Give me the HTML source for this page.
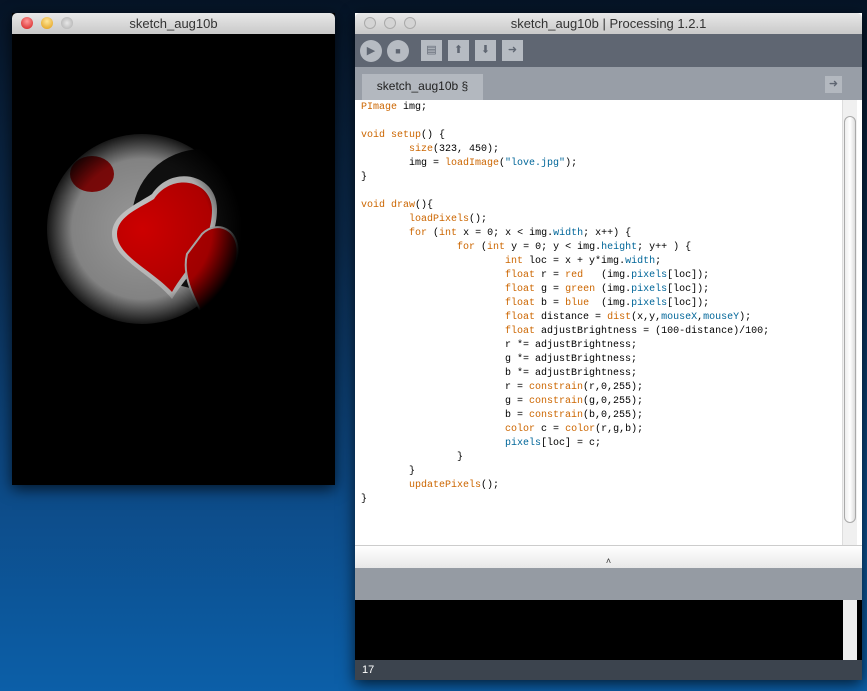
<!DOCTYPE html>
<html><head><style>
body{margin:0;width:867px;height:691px;overflow:hidden;background:linear-gradient(180deg,#061426 0%,#0b2a4c 35%,#0d4a86 70%,#0c5fa8 100%);font-family:"Liberation Sans",sans-serif;position:relative}
.win{position:absolute;box-shadow:0 4px 14px rgba(0,0,0,.7)}
.tb{height:21px;background:linear-gradient(#e8e8e8,#c9c9c9);border-radius:5px 5px 0 0;text-align:center;font-size:13px;line-height:21px;color:#333;position:relative}
.l{position:absolute;top:4px;width:12px;height:12px;border-radius:50%}
pre{margin:0;font-family:"Liberation Mono",monospace;font-size:10px;line-height:14px;color:#000}
.o{color:#cc6600}.b{color:#006699}
</style></head><body>
<div class="win" style="left:12px;top:13px;width:323px;height:472px;background:#000">
<div class="tb"><span class="l" style="left:9px;background:radial-gradient(circle at 50% 35%,#ff9a9a,#d21a1a)"></span><span class="l" style="left:29px;background:radial-gradient(circle at 50% 35%,#ffe79a,#e09a10)"></span><span class="l" style="left:49px;background:radial-gradient(#e8e8e8,#aaa)"></span>sketch_aug10b</div>
<svg width="323" height="451" style="display:block">
<defs><radialGradient id="v" cx="130" cy="195" r="100" gradientUnits="userSpaceOnUse"><stop offset="0" stop-color="#000" stop-opacity="0"/><stop offset=".7" stop-color="#000" stop-opacity=".15"/><stop offset="1" stop-color="#000" stop-opacity="1"/></radialGradient></defs>
<circle cx="130" cy="195" r="95" fill="#999"/>
<circle cx="190" cy="185" r="70" fill="#111"/>
<path d="M140 160 C160 130 205 140 205 175 C205 215 175 240 160 265 C140 240 100 225 100 200 C100 180 125 170 140 160Z" fill="#c8c8c8"/>
<path d="M142 165 C160 138 200 146 200 176 C200 212 172 236 160 258 C140 236 105 222 105 200 C105 182 128 174 142 165Z" fill="#c00"/>
<path d="M190 200 C205 185 230 195 225 225 C222 250 200 265 190 280 C180 260 170 240 175 220 Z" fill="#b00" stroke="#bbb" stroke-width="2"/>
<ellipse cx="80" cy="140" rx="22" ry="18" fill="#8a0a0a"/>
<rect width="323" height="451" fill="url(#v)"/>
</svg>
</div>
<div class="win" style="left:355px;top:13px;width:507px;height:667px;background:#fff">
<div class="tb"><span class="l" style="left:9px;background:#d4d4d4;border:1px solid #aaa;width:10px;height:10px"></span><span class="l" style="left:29px;background:#d4d4d4;border:1px solid #aaa;width:10px;height:10px"></span><span class="l" style="left:49px;background:#d4d4d4;border:1px solid #aaa;width:10px;height:10px"></span>sketch_aug10b | Processing 1.2.1</div>
<div style="height:33px;background:#5f6672;position:relative">
<div style="position:absolute;left:5px;top:6px;width:22px;height:22px;border-radius:50%;background:#b6bbc2;color:#5f6672;font-size:11px;text-align:center;line-height:22px">▶</div>
<div style="position:absolute;left:32px;top:6px;width:22px;height:22px;border-radius:50%;background:#b6bbc2;color:#5f6672;font-size:9px;text-align:center;line-height:22px">■</div>
<div style="position:absolute;left:66px;top:6px;width:21px;height:21px;background:#b6bbc2;color:#5f6672;font-size:11px;text-align:center;line-height:21px">▤</div>
<div style="position:absolute;left:93px;top:6px;width:21px;height:21px;background:#b6bbc2;color:#5f6672;font-size:11px;text-align:center;line-height:21px">⬆</div>
<div style="position:absolute;left:120px;top:6px;width:21px;height:21px;background:#b6bbc2;color:#5f6672;font-size:11px;text-align:center;line-height:21px">⬇</div>
<div style="position:absolute;left:147px;top:6px;width:21px;height:21px;background:#b6bbc2;color:#5f6672;font-size:11px;text-align:center;line-height:21px">➜</div>
</div>
<div style="height:33px;background:#989ea7;position:relative">
<div style="position:absolute;left:7px;top:7px;width:121px;height:26px;background:#b3b8bf;font-size:12px;line-height:24px;text-align:center;color:#222">sketch_aug10b §</div>
<div style="position:absolute;right:20px;top:9px;width:17px;height:17px;background:#b3b8bf;color:#5f6672;font-size:11px;text-align:center;line-height:17px">➜</div>
</div>
<div style="height:445px;position:relative;padding:1px 0 0 6px;box-sizing:border-box">
<div style="position:absolute;right:5px;top:0;width:14px;height:445px;background:#f0f0f0;border-left:1px solid #ddd"><div style="margin:16px 1px;height:405px;border:1px solid #aaa;border-radius:7px;background:linear-gradient(90deg,#eee,#fff,#ddd)"></div></div>
<pre><span class="o">PImage</span> img;

<span class="o">void</span> <span class="o">setup</span>() {
        <span class="o">size</span>(323, 450);
        img = <span class="o">loadImage</span>(<span class="b">"love.jpg"</span>);
}

<span class="o">void</span> <span class="o">draw</span>(){
        <span class="o">loadPixels</span>();
        <span class="o">for</span> (<span class="o">int</span> x = 0; x &lt; img.<span class="b">width</span>; x++) {
                <span class="o">for</span> (<span class="o">int</span> y = 0; y &lt; img.<span class="b">height</span>; y++ ) {
                        <span class="o">int</span> loc = x + y*img.<span class="b">width</span>;
                        <span class="o">float</span> r = <span class="o">red</span>   (img.<span class="b">pixels</span>[loc]);
                        <span class="o">float</span> g = <span class="o">green</span> (img.<span class="b">pixels</span>[loc]);
                        <span class="o">float</span> b = <span class="o">blue</span>  (img.<span class="b">pixels</span>[loc]);
                        <span class="o">float</span> distance = <span class="o">dist</span>(x,y,<span class="b">mouseX</span>,<span class="b">mouseY</span>);
                        <span class="o">float</span> adjustBrightness = (100-distance)/100;
                        r *= adjustBrightness;
                        g *= adjustBrightness;
                        b *= adjustBrightness;
                        r = <span class="o">constrain</span>(r,0,255);
                        g = <span class="o">constrain</span>(g,0,255);
                        b = <span class="o">constrain</span>(b,0,255);
                        <span class="o">color</span> c = <span class="o">color</span>(r,g,b);
                        <span class="b">pixels</span>[loc] = c;
                }
        }
        <span class="o">updatePixels</span>();
}</pre>
</div>
<div style="height:23px;background:linear-gradient(#fff,#e8e8e8);text-align:center;font-size:9px;color:#333;line-height:30px;border-top:1px solid #ccc;box-sizing:border-box">˄</div>
<div style="height:32px;background:#959ba3"></div>
<div style="height:60px;background:#000;position:relative"><div style="position:absolute;right:5px;top:0;width:14px;height:60px;background:#f0f0f0"></div></div>
<div style="height:20px;background:#3c444e;color:#fff;font-size:11px;line-height:20px;padding-left:7px">17</div>
</div>
</body></html>
